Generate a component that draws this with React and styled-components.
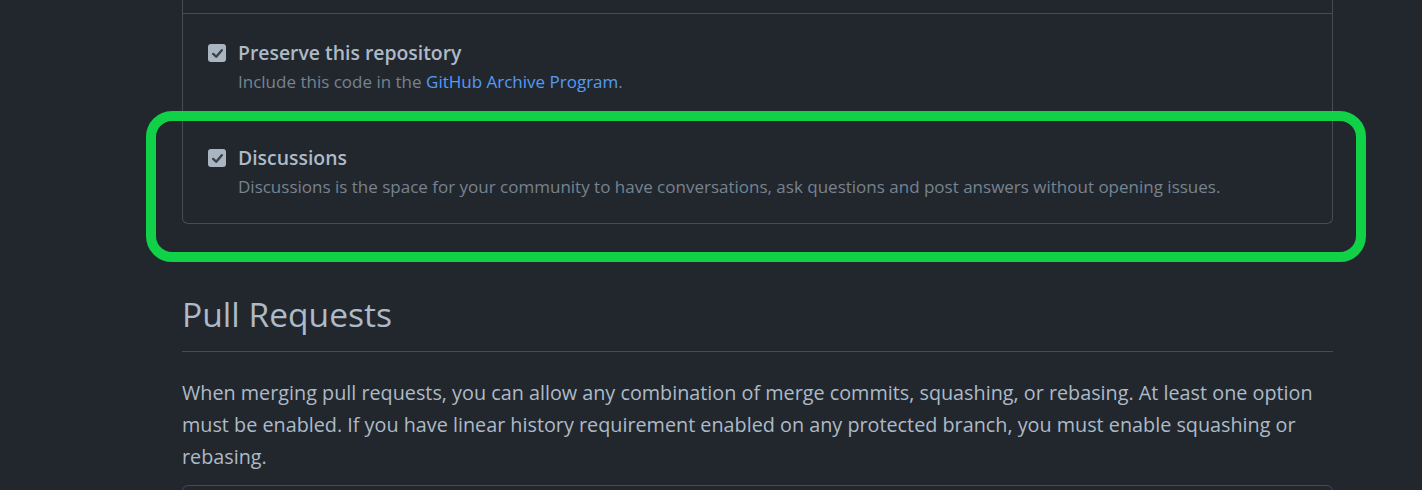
import React from "react";
import styled, { createGlobalStyle } from "styled-components";

const GlobalStyle = createGlobalStyle`
  body {
    margin: 0;
    background: #22272e;
    font-family: "Open Sans", "Noto Sans", sans-serif;
    color: #adbac7;
  }
`;

const Page = styled.div`
  position: relative;
  width: 1422px;
  height: 490px;
  overflow: hidden;
`;

const Column = styled.div`
  margin-left: 182px;
  width: 1151px;
`;

const Box = styled.div`
  border: 1px solid #444c56;
  border-top: none;
  border-radius: 0 0 6px 6px;
`;

const BoxTail = styled.div`
  height: 13px;
`;

const Row = styled.div`
  display: flex;
  gap: 12px;
  padding: 26px 25px 23px;
  border-top: 1px solid #444c56;
`;

const Check = styled.span`
  flex: none;
  width: 18px;
  height: 18px;
  margin-top: 4px;
  border-radius: 3px;
  background: #a9b5c0;
  display: flex;
  align-items: center;
  justify-content: center;
`;

const Label = styled.div`
  font-size: 19.4px;
  line-height: 26px;
  font-weight: 600;
  color: #adbac7;
`;

const Note = styled.div`
  margin-top: 3px;
  font-size: 17px;
  line-height: 26px;
  color: #768390;
`;

const Link = styled.a`
  color: #539bf5;
  text-decoration: none;
`;

const Heading = styled.h2`
  margin: 66px 0 0;
  padding-bottom: 13px;
  border-bottom: 1px solid #444c56;
  font-size: 33.6px;
  line-height: 48px;
  font-weight: 400;
  color: #adbac7;
`;

const Lead = styled.p`
  margin: 25px 0 0;
  font-size: 19.8px;
  line-height: 32px;
  color: #adbac7;
`;

const NextBox = styled.div`
  margin-top: 12px;
  height: 40px;
  border: 1px solid #444c56;
  border-radius: 6px;
`;

const Highlight = styled.div`
  position: absolute;
  left: 146px;
  top: 111px;
  width: 1220px;
  height: 151px;
  box-sizing: border-box;
  border: 10px solid #10d148;
  border-radius: 26px;
  pointer-events: none;
`;

const CheckMark = () => (
  <svg width="13" height="13" viewBox="0 0 12 12">
    <path d="M2 6.4 L4.8 9 L10 3" fill="none" stroke="#3a4149" strokeWidth="2.2" strokeLinecap="round" strokeLinejoin="round" />
  </svg>
);

const Option = ({ title, children }) => (
  <Row>
    <Check>
      <CheckMark />
    </Check>
    <div>
      <Label>{title}</Label>
      <Note>{children}</Note>
    </div>
  </Row>
);

export default function App() {
  return (
    <Page>
      <GlobalStyle />
      <Column>
        <Box>
          <BoxTail />
          <Option title="Preserve this repository">
            Include this code in the <Link href="#">GitHub Archive Program</Link>.
          </Option>
          <Option title="Discussions">
            Discussions is the space for your community to have conversations, ask questions and post answers without opening issues.
          </Option>
        </Box>
        <Heading>Pull Requests</Heading>
        <Lead>
          When merging pull requests, you can allow any combination of merge commits, squashing, or rebasing. At least one option must be enabled. If you have linear history requirement enabled on any protected branch, you must enable squashing or rebasing.
        </Lead>
        <NextBox />
      </Column>
      <Highlight />
    </Page>
  );
}
